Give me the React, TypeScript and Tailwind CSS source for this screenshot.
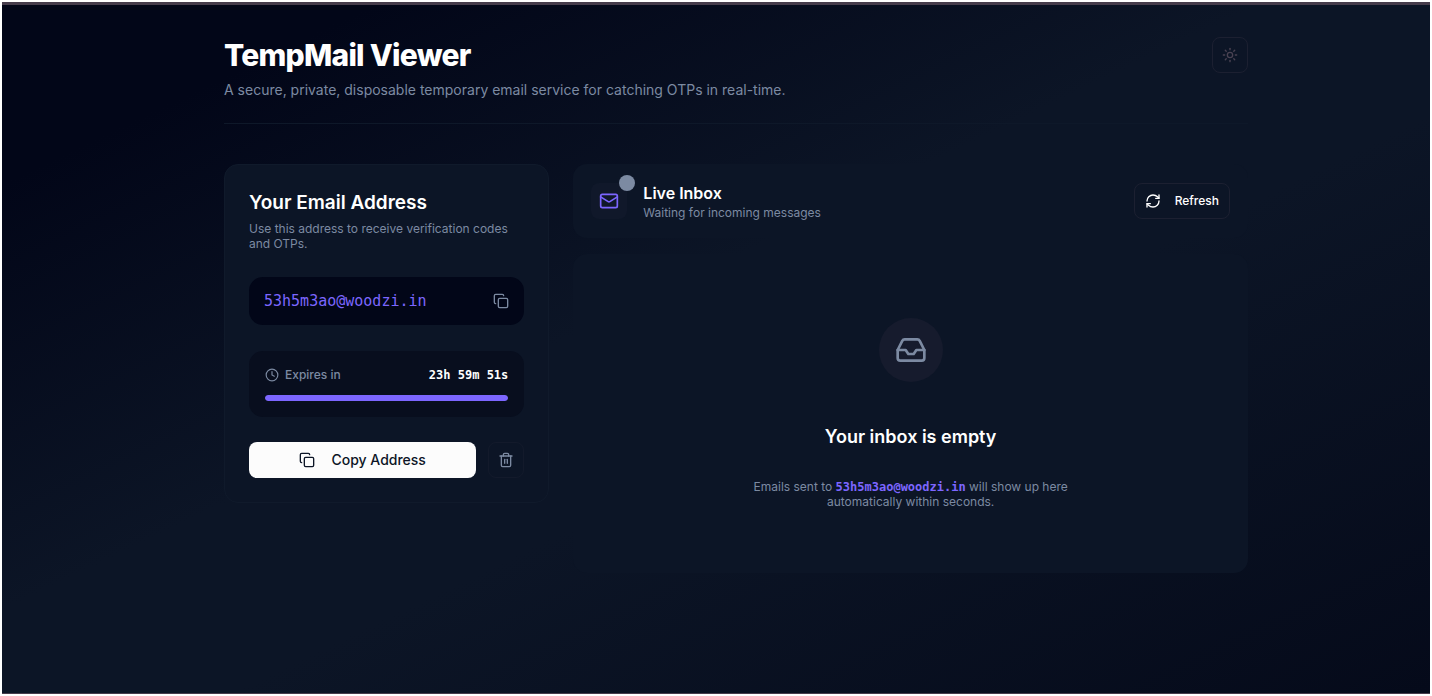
import { useState } from 'react';
import { Clock, Copy, Inbox, Mail, RefreshCw, Sun, Trash2 } from 'lucide-react';

const ADDRESS = '53h5m3ao@woodzi.in';

export default function App() {
  const [dark, setDark] = useState(true);
  const [secondsLeft] = useState(86391);

  const hours = Math.floor(secondsLeft / 3600);
  const minutes = Math.floor((secondsLeft % 3600) / 60);
  const seconds = secondsLeft % 60;

  const handleCopy = () => {
    navigator.clipboard.writeText(ADDRESS);
  };

  return (
    <div className="min-h-screen flex flex-col bg-white p-[2px] font-['Inter',sans-serif] text-white">
      <div className="flex-1 border-t-3 border-b border-[#463c4b] bg-[linear-gradient(to_bottom_right,#020618_13%,#0c1526_44%,#0c1526_58%,#050a1a)] pl-10">
        <div className="max-w-5xl mx-auto pt-8">

          {/* Header */}
          <header className="flex items-start justify-between border-b border-[#0e1829] pb-[21px] mb-10">
            <div>
              <h1 className="text-3xl font-extrabold tracking-tight">TempMail Viewer</h1>
              <p className="mt-[5px] text-sm leading-6 text-[#7c8aa2]">
                A secure, private, disposable temporary email service for catching OTPs in real-time.
              </p>
            </div>
            <button
              aria-label="Toggle theme"
              onClick={() => setDark(!dark)}
              className="flex size-9 items-center justify-center rounded-lg border border-[#1c2031] text-[#4a4252]"
            >
              <Sun size={16} />
            </button>
          </header>

          <main className="grid grid-cols-3 items-start gap-6">

            {/* Address card */}
            <section className="rounded-[14px] border border-[#101a2b] bg-[#0c1526] p-6">
              <h2 className="text-[19px] leading-7 font-semibold">Your Email Address</h2>
              <p className="mt-1 text-xs leading-[15px] text-[#7c8aa2]">
                Use this address to receive verification codes and OTPs.
              </p>

              <div className="mt-[26px] flex h-12 items-center justify-between rounded-[14px] bg-[#020618] px-[15px]">
                <span className="font-['DejaVu_Sans_Mono',monospace] text-[15px] text-[#7c66ff]">{ADDRESS}</span>
                <button aria-label="Copy address" onClick={handleCopy} className="text-[#7c8aa2]">
                  <Copy size={16} />
                </button>
              </div>

              <div className="mt-[26px] rounded-[14px] bg-[#080e1e] p-4">
                <div className="flex items-center justify-between text-xs">
                  <span className="flex items-center gap-1.5 font-medium text-[#7c8aa2]">
                    <Clock size={14} />
                    Expires in
                  </span>
                  <span className="font-['DejaVu_Sans_Mono',monospace] font-bold">
                    {hours}h {minutes}m {seconds}s
                  </span>
                </div>
                <div className="mt-3 h-1.5 overflow-hidden rounded-full bg-[#1c2233]">
                  <div className="h-full rounded-full bg-[#7c66ff]" style={{ width: `${(secondsLeft / 86400) * 100}%` }} />
                </div>
              </div>

              <div className="mt-[25px] flex gap-3">
                <button
                  onClick={handleCopy}
                  className="flex h-9 flex-1 items-center justify-center gap-4 rounded-lg bg-[#fcfcfc] text-sm font-medium text-[#0c1526]"
                >
                  <Copy size={16} />
                  Copy Address
                </button>
                <button
                  aria-label="Delete address"
                  className="flex size-9 items-center justify-center rounded-lg border border-[#131a2b] text-[#7c8aa2]"
                >
                  <Trash2 size={16} />
                </button>
              </div>
            </section>

            <div className="col-span-2 flex flex-col gap-4">
              {/* Inbox header */}
              <section className="flex items-center justify-between rounded-[14px] bg-[#0c1526] px-[18px] py-[15px]">
                <div className="flex items-center gap-4">
                  <div className="relative flex size-9 items-center justify-center rounded-lg bg-[#10182a] text-[#7c66ff]">
                    <Mail size={20} />
                    <span className="absolute -top-2 -right-2 size-4 rounded-full bg-[#7c8aa2]" />
                  </div>
                  <div className="pt-1">
                    <h2 className="text-base leading-5 font-semibold">Live Inbox</h2>
                    <p className="text-xs leading-5 text-[#7c8aa2]">Waiting for incoming messages</p>
                  </div>
                </div>
                <button className="flex h-9 items-center gap-3.5 rounded-lg border border-[#1c2031] px-2.5 text-xs font-medium">
                  <RefreshCw size={16} />
                  Refresh
                </button>
              </section>

              {/* Empty state */}
              <section className="flex flex-col items-center rounded-[14px] bg-[#0c1526] px-6 py-16 text-center">
                <div className="flex size-16 items-center justify-center rounded-full bg-[#161b2d] text-[#7c8aa2]">
                  <Inbox size={32} />
                </div>
                <h3 className="mt-[41px] text-lg leading-7 font-semibold">Your inbox is empty</h3>
                <p className="mt-7 max-w-80 text-xs leading-[15px] text-[#7c8aa2]">
                  Emails sent to{' '}
                  <span className="inline-block font-['DejaVu_Sans_Mono',monospace] leading-3 font-bold text-[#7c66ff]">{ADDRESS}</span>{' '}
                  will show up here automatically within seconds.
                </p>
              </section>
            </div>
          </main>
        </div>
      </div>
    </div>
  );
}
